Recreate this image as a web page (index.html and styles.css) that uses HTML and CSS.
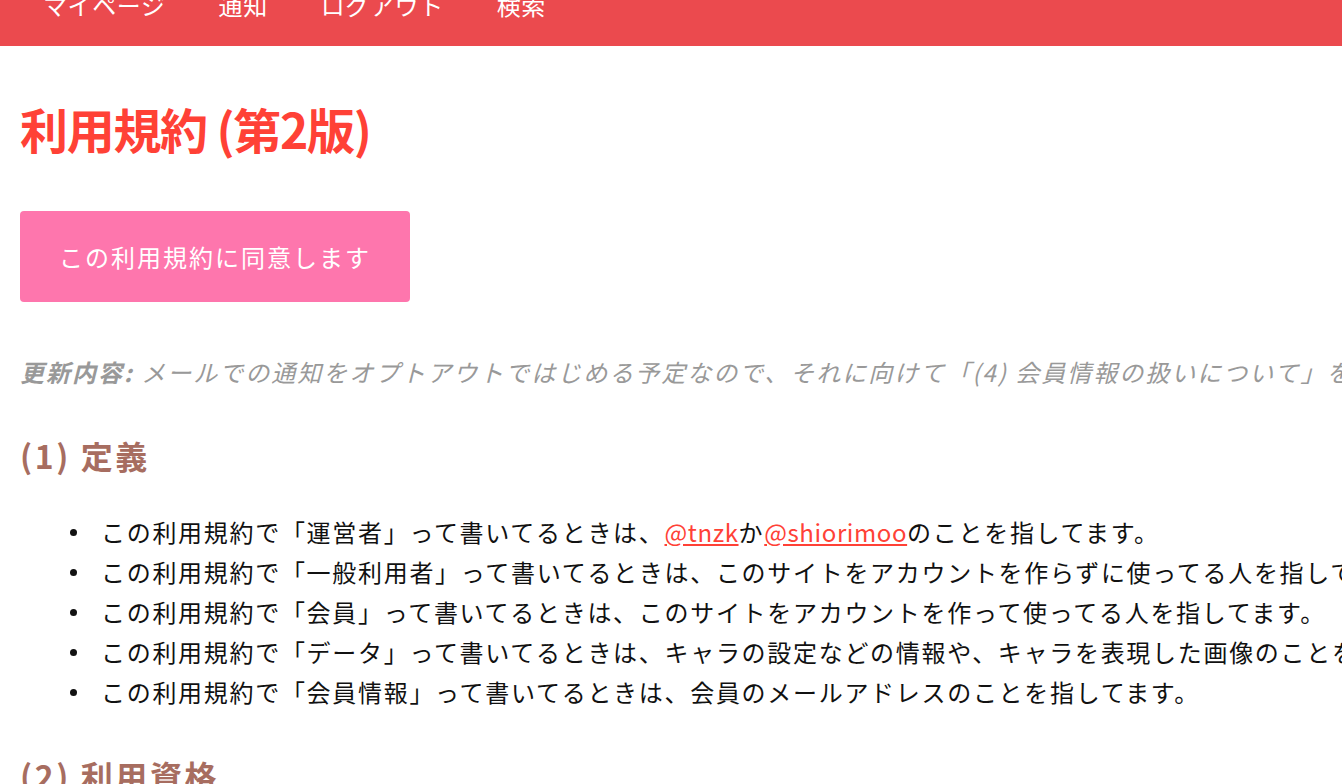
FILE: index.html
```html
<!DOCTYPE html>
<html lang="ja">
<head>
<meta charset="utf-8">
<title>利用規約 (第2版)</title>
<link rel="stylesheet" href="styles.css">
</head>
<body>
<header class="nav">
  <ul class="nav-list">
    <li class="nav-item">マイページ</li>
    <li class="nav-item">通知</li>
    <li class="nav-item">ログアウト</li>
    <li class="nav-item">検索</li>
  </ul>
</header>
<main class="content">
  <h1 class="title">利用規約 (第2版)</h1>
  <button class="agree">この利用規約に同意します</button>
  <p class="update"><strong>更新内容:</strong> メールでの通知をオプトアウトではじめる予定なので、それに向けて「(4) 会員情報の扱いについて」を変更しました。</p>
  <h2 class="section">(1) 定義</h2>
  <ul class="terms">
    <li class="term"><span>この利用規約で「運営者」って書いてるときは、<a href="#" class="link">@tnzk</a>か<a href="#" class="link">@shiorimoo</a>のことを指してます。</span></li>
    <li class="term"><span>この利用規約で「一般利用者」って書いてるときは、このサイトをアカウントを作らずに使ってる人を指してます。</span></li>
    <li class="term"><span>この利用規約で「会員」って書いてるときは、このサイトをアカウントを作って使ってる人を指してます。</span></li>
    <li class="term"><span>この利用規約で「データ」って書いてるときは、キャラの設定などの情報や、キャラを表現した画像のことを指してます。</span></li>
    <li class="term"><span>この利用規約で「会員情報」って書いてるときは、会員のメールアドレスのことを指してます。</span></li>
  </ul>
  <h2 class="section">(2) 利用資格</h2>
</main>
</body>
</html>
```

FILE: styles.css
```css
html, body {
  margin: 0;
  padding: 0;
}
body {
  font-family: "Noto Sans CJK JP", "Noto Sans", sans-serif;
  color: #111;
  background: #fff;
  overflow: hidden;
  white-space: nowrap;
}
.nav {
  background: #eb4a4e;
  height: 46px;
  overflow: hidden;
}
.nav-list {
  list-style: none;
  margin: -13px 0 0 0;
  padding: 0 0 0 43px;
  display: flex;
  gap: 53px;
}
.nav-item {
  color: #fff;
  font-size: 24px;
  line-height: 36px;
  letter-spacing: 0.6px;
}
.content {
  padding: 0 20px;
}
.title {
  margin: 53px 0 0 0;
  font-size: 48px;
  line-height: 58px;
  font-weight: 700;
  letter-spacing: -1.3px;
  color: #ff4136;
}
.agree {
  display: block;
  margin: 54px 0 0 0;
  border: 0;
  border-radius: 4px;
  background: #fe76ad;
  color: #fff;
  font-family: inherit;
  font-size: 24px;
  line-height: 27px;
  letter-spacing: 2px;
  padding: 32px 38px;
  width: 390px;
  text-align: center;
}
.update {
  margin: 50px 0 0 0;
  font-size: 24px;
  line-height: 40px;
  color: #999;
  font-style: italic;
  letter-spacing: 2px;
}
.update strong {
  font-weight: 700;
}
.section {
  margin: 43px 0 0 0;
  font-size: 32px;
  line-height: 40px;
  font-weight: 700;
  color: #a76d60;
  letter-spacing: 2.6px;
}
.terms {
  list-style: none;
  margin: 37px 0 40px 0;
  padding: 0;
}
.term {
  display: flex;
  align-items: center;
  font-size: 24px;
  line-height: 40px;
  letter-spacing: 1.7px;
}
.term::before {
  content: "";
  flex: none;
  width: 7px;
  height: 7px;
  border-radius: 50%;
  background: #111;
  margin: 0 24px 0 50px;
}
.link {
  color: #ff4136;
  text-decoration: underline;
  letter-spacing: 0.6px;
}
```
